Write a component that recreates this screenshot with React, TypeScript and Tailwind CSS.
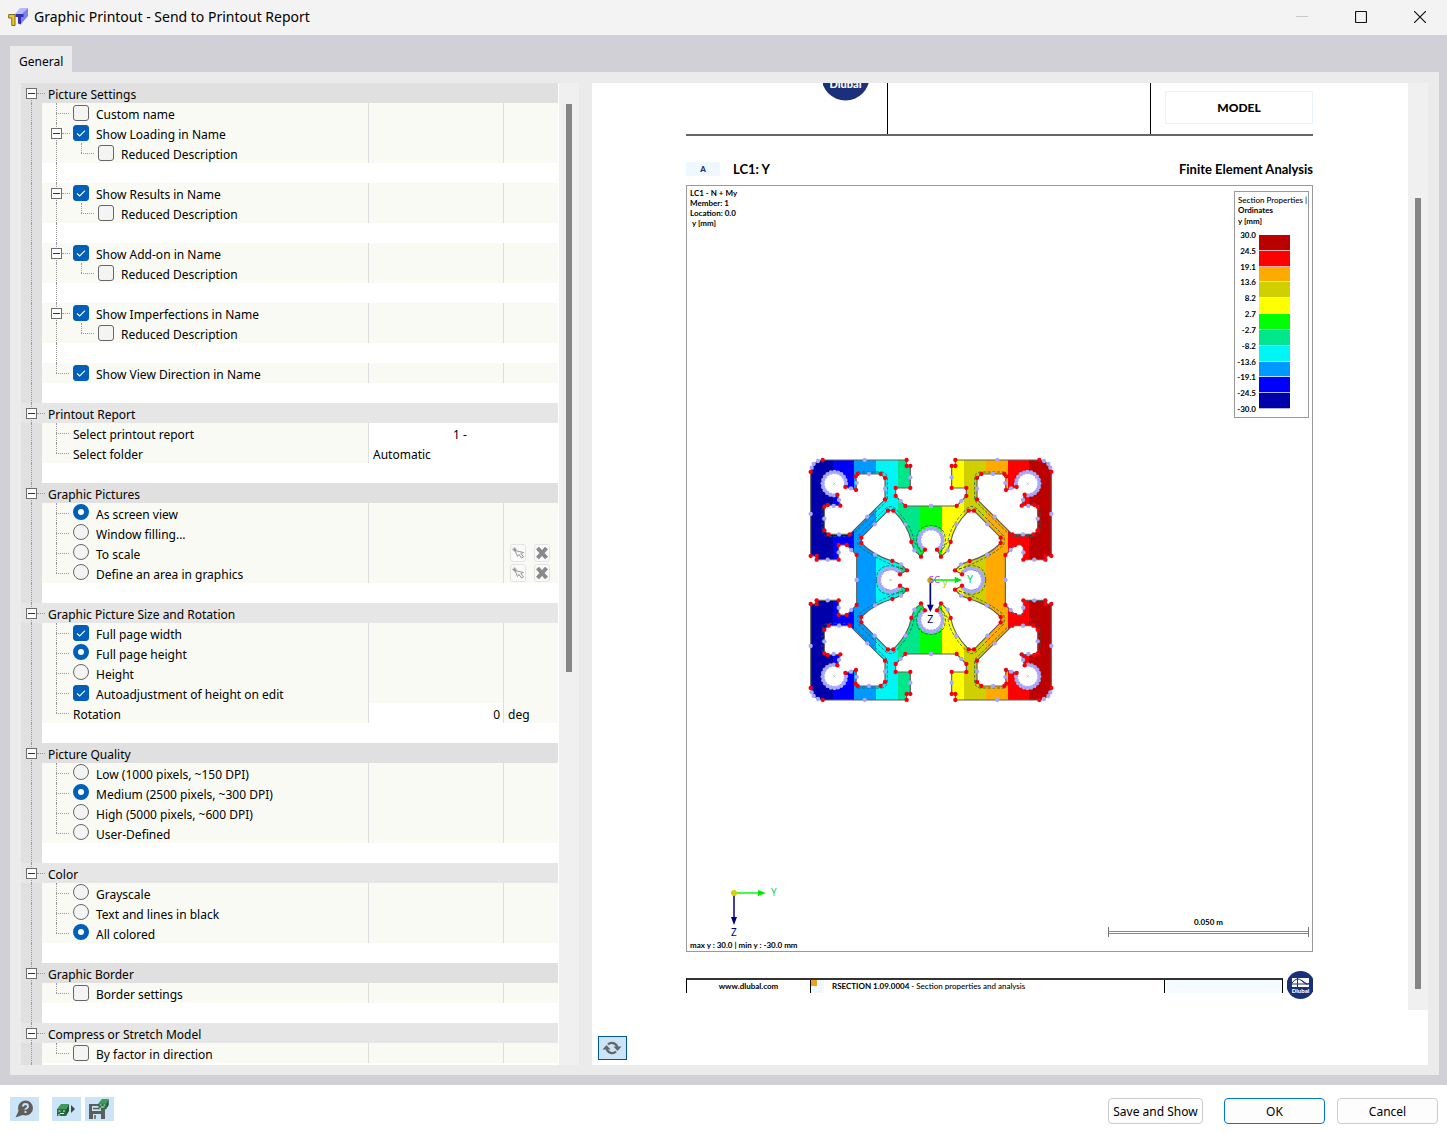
import React from "react";

type Row =
  | { kind: "head"; text: string }
  | { kind: "gap"; line?: boolean }
  | {
      kind: "check" | "radio" | "plain";
      text: string;
      checked?: boolean;
      level?: 2;
      box?: boolean;
      last?: boolean;
      group?: string;
      value?: "report" | "folder" | "angle";
      tools?: boolean;
    };

const rows: Row[] = [
  { kind: "head", text: "Picture Settings" },
  { kind: "check", text: "Custom name" },
  { kind: "check", text: "Show Loading in Name", checked: true, box: true },
  { kind: "check", text: "Reduced Description", level: 2 },
  { kind: "gap", line: true },
  { kind: "check", text: "Show Results in Name", checked: true, box: true },
  { kind: "check", text: "Reduced Description", level: 2 },
  { kind: "gap", line: true },
  { kind: "check", text: "Show Add-on in Name", checked: true, box: true },
  { kind: "check", text: "Reduced Description", level: 2 },
  { kind: "gap", line: true },
  { kind: "check", text: "Show Imperfections in Name", checked: true, box: true },
  { kind: "check", text: "Reduced Description", level: 2 },
  { kind: "gap", line: true },
  { kind: "check", text: "Show View Direction in Name", checked: true, last: true },
  { kind: "gap" },
  { kind: "head", text: "Printout Report" },
  { kind: "plain", text: "Select printout report", value: "report" },
  { kind: "plain", text: "Select folder", value: "folder", last: true },
  { kind: "gap" },
  { kind: "head", text: "Graphic Pictures" },
  { kind: "radio", text: "As screen view", checked: true, group: "view" },
  { kind: "radio", text: "Window filling...", group: "view" },
  { kind: "radio", text: "To scale", group: "view", tools: true },
  { kind: "radio", text: "Define an area in graphics", group: "view", tools: true, last: true },
  { kind: "gap" },
  { kind: "head", text: "Graphic Picture Size and Rotation" },
  { kind: "check", text: "Full page width", checked: true },
  { kind: "radio", text: "Full page height", checked: true, group: "size" },
  { kind: "radio", text: "Height", group: "size" },
  { kind: "check", text: "Autoadjustment of height on edit", checked: true },
  { kind: "plain", text: "Rotation", value: "angle", last: true },
  { kind: "gap" },
  { kind: "head", text: "Picture Quality" },
  { kind: "radio", text: "Low (1000 pixels, ~150 DPI)", group: "quality" },
  { kind: "radio", text: "Medium (2500 pixels, ~300 DPI)", checked: true, group: "quality" },
  { kind: "radio", text: "High (5000 pixels, ~600 DPI)", group: "quality" },
  { kind: "radio", text: "User-Defined", group: "quality", last: true },
  { kind: "gap" },
  { kind: "head", text: "Color" },
  { kind: "radio", text: "Grayscale", group: "color" },
  { kind: "radio", text: "Text and lines in black", group: "color" },
  { kind: "radio", text: "All colored", checked: true, group: "color", last: true },
  { kind: "gap" },
  { kind: "head", text: "Graphic Border" },
  { kind: "check", text: "Border settings", last: true },
  { kind: "gap" },
  { kind: "head", text: "Compress or Stretch Model" },
  { kind: "check", text: "By factor in direction", last: true },
  { kind: "gap" },
];

function Expander() {
  return (
    <button
      type="button"
      aria-label="Collapse"
      className="relative flex h-[11px] w-[11px] shrink-0 items-center justify-center border border-[#6e6e6e] bg-white"
    >
      <span className="h-px w-[7px] bg-[#333]" />
    </button>
  );
}

function Gutter() {
  return (
    <div className="w-[21px] shrink-0 bg-[#e0e0e0] pl-[10px]">
      <div className="h-5 border-l border-dotted border-[#999]" />
    </div>
  );
}

function Check({ id, checked }: { id: string; checked?: boolean }) {
  return (
    <span className="grid h-4 w-4 shrink-0">
      <input
        id={id}
        type="checkbox"
        defaultChecked={checked}
        className="peer col-start-1 row-start-1 h-4 w-4 appearance-none rounded-[3px] border border-[#666] bg-[#f4f4f4] checked:border-[#005fb8] checked:bg-[#005fb8]"
      />
      <svg
        viewBox="0 0 16 16"
        className="pointer-events-none invisible col-start-1 row-start-1 h-4 w-4 peer-checked:visible"
      >
        <path d="M4 8.5 6.7 11 12 5.7" fill="none" stroke="#fff" strokeWidth="1.1" />
      </svg>
    </span>
  );
}

function Radio({ id, group, checked }: { id: string; group?: string; checked?: boolean }) {
  return (
    <input
      id={id}
      name={group}
      type="radio"
      defaultChecked={checked}
      className="mb-0.5 h-4 w-4 shrink-0 appearance-none rounded-full border border-[#666] bg-[#f4f4f4] checked:border-5 checked:border-[#005fb8] checked:bg-white"
    />
  );
}

function RowTools() {
  return (
    <div className="flex h-full items-center gap-2 pl-[6px]">
      <button type="button" aria-label="Pick" className="flex h-[18px] w-4 items-center justify-center rounded-[3px] border border-[#e4e4e4] bg-[#fafafa]">
        <svg viewBox="0 0 14 14" className="h-3.5 w-3.5 shrink-0" fill="none" stroke="#999" strokeWidth="1">
          <path d="M1.500 3.500h4M3.500 1.500v4" strokeWidth="1.600" />
          <path d="M4 4.500 6.500 10.500 8 8.500 10.500 12 12.500 11 10 7.500 12.500 6.500Z" fill="#f4f4f4" />
        </svg>
      </button>
      <button type="button" aria-label="Clear" className="flex h-[18px] w-4 items-center justify-center rounded-[3px] border border-[#e4e4e4] bg-[#fafafa]">
        <svg viewBox="0 0 14 14" className="h-3.5 w-3.5 shrink-0" stroke="#8a8a8a" strokeWidth="4">
          <path d="M2.500 2l9 10M11.500 2l-9 10" />
        </svg>
      </button>
    </div>
  );
}

function TreeRow({ row, index, shade }: { row: Row; index: number; shade: boolean }) {
  const id = "opt-" + index;
  if (row.kind === "head") {
    return (
      <div className={"relative flex h-5 items-center " + (shade ? "bg-[#e0e0e0]" : "bg-[#e6e6e6]")}>
        <div
          className={
            "absolute left-[10px] border-l border-dotted border-[#999] " + (index === 0 ? "top-[10px] h-[10px]" : "top-0 h-5")
          }
        />
        <div className="flex w-[27px] items-center pl-[5px]">
          <Expander />
          <div className="w-2 border-t border-dotted border-[#999]" />
        </div>
        <span className="pt-1">{row.text}</span>
      </div>
    );
  }
  if (row.kind === "gap") {
    return (
      <div className="flex h-5 bg-white">
        <Gutter />
        <div className="pl-[14px]">
          {row.line && <div className="h-5 border-l border-dotted border-[#999]" />}
        </div>
      </div>
    );
  }
  const second = row.level === 2;
  return (
    <div className="flex h-5 bg-[#f9faf4]">
      <Gutter />
      <div className="relative flex w-[326px] shrink-0 items-center">
        {!second && (
          <div className={"absolute top-0 left-[14px] border-l border-dotted border-[#999] " + (row.last ? "h-[10px]" : "h-5")} />
        )}
        {second && <div className="absolute top-0 left-[14px] h-5 border-l border-dotted border-[#999]" />}
        {second && <div className="absolute top-0 left-[39px] h-[10px] border-l border-dotted border-[#999]" />}
        <div className={"flex shrink-0 items-center " + (second ? "w-[56px] pl-[39px]" : row.box ? "w-[31px] pl-[9px]" : "w-[31px] pl-[14px]")}>
          {row.box && <Expander />}
          <div className={"border-t border-dotted border-[#999] " + (row.box ? "w-2" : "w-[13px]")} />
        </div>
        {row.kind === "check" && <Check id={id} checked={row.checked} />}
        {row.kind === "radio" && <Radio id={id} group={row.group} checked={row.checked} />}
        <label htmlFor={id} className={row.kind === "plain" ? "pt-1" : "pt-1 pl-[7px]"}>
          {row.text}
        </label>
      </div>
      {row.value === "report" && (
        <div className="flex-1 border-l border-[#dedede] bg-white">
          <select id={id} className="h-5 w-full appearance-none bg-transparent pt-1 pl-[84px] leading-4">
            <option>1 -</option>
          </select>
        </div>
      )}
      {row.value === "folder" && (
        <div className="flex-1 border-l border-[#dedede] bg-white">
          <select id={id} className="h-5 w-full appearance-none bg-transparent pt-1 pl-1 leading-4">
            <option>Automatic</option>
          </select>
        </div>
      )}
      {row.value === "angle" && (
        <>
          <div className="w-[135px] shrink-0 border-l border-[#dedede] bg-white">
            <input id={id} type="text" defaultValue="0" className="h-5 w-full bg-transparent pt-0.5 pr-[3px] text-right" />
          </div>
          <div className="flex flex-1 items-center border-l border-[#dedede] pt-1 pl-1">deg</div>
        </>
      )}
      {!row.value && (
        <>
          <div className="w-[135px] shrink-0 border-l border-[#dedede]" />
          <div className="flex-1 border-l border-[#dedede]">{row.tools && <RowTools />}</div>
        </>
      )}
    </div>
  );
}

function Tree() {
  let heads = 0;
  return (
    <div className="flex w-[558px] shrink-0">
      <div className="w-[538px] overflow-hidden border-r border-white bg-white">
        {rows.map((row, i) => {
          if (row.kind === "head") heads += 1;
          return <TreeRow key={i} row={row} index={i} shade={heads % 2 === 1} />;
        })}
      </div>
      <div className="w-5 bg-[#f0f0f0] pt-[21px] pl-[7px]">
        <div className="h-[568px] w-1.5 bg-[#858585]" />
      </div>
    </div>
  );
}

const bands = ["#0000aa", "#0000ff", "#0099ff", "#00f5f5", "#00e68a", "#00ff00", "#ffff00", "#d0d000", "#ffaa00", "#ff0000", "#bb0000"];

const legend = ["30.0", "24.5", "19.1", "13.6", "8.2", "2.7", "-2.7", "-8.2", "-13.6", "-19.1", "-24.5", "-30.0"];

const outer =
  "M393 168H316L287 138V114H331V48H320V30H68Q36 34 32 66V318H50V329H116V285H140L170 315V390";
const inner =
  "M237 390A35 35 0 0 1 300 373L321 361L303 343L277 333Q222 318 184 279V263L264 182H280Q326 228 334 276L343 301L363 320L375 299A35 35 0 0 1 393 235";
const pocket =
  "M112 134A35 35 0 1 1 136 111L168 120L170 99L167 79L173 72H242L255 84V148L149 253H86L73 241V170L83 165L121 167L117 150Z";
const quarter =
  "M394 168H316L287 138V114H331V48H320V30H68Q36 34 32 66V318H50V329H116V285H140L170 315V391H237A35 35 0 0 1 300 373L321 361L303 343L277 333Q222 318 184 279V263L264 182H280Q326 228 334 276L343 301L363 320L375 299A35 35 0 0 1 394 235Z" +
  pocket;

const red: [number, number][] = [
  [68, 30], [320, 30], [320, 48], [331, 48], [331, 114], [287, 114], [287, 138], [316, 168],
  [32, 66], [32, 318], [50, 318], [50, 329], [116, 329], [116, 285], [140, 285], [170, 315],
  [300, 373], [321, 361], [277, 333], [184, 279], [184, 263], [264, 182], [280, 182], [334, 276], [363, 320], [375, 299],
  [112, 134], [136, 111], [168, 120], [167, 79], [173, 72], [242, 72], [255, 84], [255, 148], [149, 253], [86, 253],
  [73, 241], [73, 170], [83, 165], [121, 167],
];

function arc(cx: number, cy: number, r: number, from: number, to: number, n: number): [number, number][] {
  return Array.from({ length: n }, (_, i) => {
    const a = ((from + ((to - from) * i) / (n - 1)) * Math.PI) / 180;
    return [cx + r * Math.cos(a), cy + r * Math.sin(a)];
  });
}

const pale: [number, number][] = [
  [194, 30], [331, 82], [302, 153], [393, 168], [32, 192], [83, 329], [116, 307], [154, 300], [170, 390],
  [303, 343], [225, 314], [224, 223], [317, 223], [343, 301], [153, 115], [170, 99], [207, 72], [255, 116],
  [202, 200], [117, 253], [73, 206], [101, 168], [117, 150], [54, 33], [41, 42], [35, 53],
  ...arc(103, 101, 35, 92, 360, 16),
  ...arc(272, 390, 35, 180, 315, 8),
  ...arc(393, 270, 35, 137, 270, 8),
];

const mirrors = ["", "matrix(-1 0 0 1 786 0)", "matrix(1 0 0 -1 0 780)", "matrix(-1 0 0 -1 786 780)"];

function SectionDrawing() {
  return (
    <svg viewBox="0 0 786 780" className="h-[260px] w-[262px]" role="img" aria-label="Cross-section ordinates">
      <clipPath id="profile">
        {mirrors.map((m) => (
          <path key={m} d={quarter} clipRule="evenodd" transform={m || undefined} />
        ))}
      </clipPath>
      <g clipPath="url(#profile)" shapeRendering="crispEdges">
        {bands.map((c, i) => (
          <rect key={c} x={32 + i * 65.64} y="20" width="67" height="740" fill={c} />
        ))}
      </g>
      {mirrors.map((m) => (
        <g key={m} transform={m || undefined}>
          <g fill="none" stroke="#606060" strokeWidth="3.500">
            <path d={outer} />
            <path d={inner} />
            <path d={pocket} />
          </g>
          <g fill="none" stroke="#17605c" strokeWidth="2.500" strokeDasharray="9 5">
            <path d="M172 66H245Q262 68 262 86V151L152 260H84Q66 256 66 241V182Q68 162 88 159" />
            <path d="M229 390Q230 348 272 347L312 358Q230 330 176 287Q168 266 180 252L254 178Q274 160 290 180Q338 232 342 275L364 306L350 280Q346 228 393 227" />
          </g>
          {pale.map(([x, y], i) => (
            <circle key={i} cx={x} cy={y} r="6.500" fill="#a8a8fa" />
          ))}
          {red.map(([x, y], i) => (
            <circle key={i} cx={x} cy={y} r="6.500" fill="#f5000f" />
          ))}
        </g>
      ))}
      <g fill="none" stroke="#aaa" strokeWidth="2">
        <path d="M100 98l6 6m0-6-6 6M269 387l6 6m0-6-6 6M680 98l6 6m0-6-6 6M100 676l6 6m0-6-6 6M680 676l6 6m0-6-6 6" />
      </g>
      <path d="M393 390H470" stroke="#0f0" strokeWidth="5" />
      <path d="M464 380L486 390L464 400Z" fill="#00e020" />
      <path d="M391 390V468" stroke="#00008b" strokeWidth="5" />
      <path d="M381 464L391 486L401 464Z" fill="#00008b" />
      <circle cx="391" cy="391" r="9" fill="#b9b000" />
      <g className="font-['Noto_Sans'] font-normal">
        <text x="386" y="398" fontSize="29" fill="#a040e0">SC</text>
        <text x="428" y="409" fontSize="27" fill="#b4c800">y</text>
        <text x="501" y="398" fontSize="32" fill="#00d060">Y</text>
        <text x="382" y="518" fontSize="32" fill="#00007d">Z</text>
      </g>
    </svg>
  );
}

function Report() {
  return (
    <div className="flex min-w-0 flex-1 flex-col bg-white pr-[95px] pl-[94px] font-[Lato] text-[8px] leading-[10px] font-bold text-black">
      <header className="flex h-[53px] border-b-2 border-[#666]">
        <div className="flex w-[202px] justify-end border-r border-black pr-[18px]">
          <svg viewBox="0 0 46 18" className="h-[18px] w-[46px]" role="img" aria-label="Dlubal">
            <circle cx="22.500" cy="-6.500" r="24" fill="#1b2f7b" />
            <text x="22.500" y="5" fontSize="11" fontWeight="900" fill="#fff" textAnchor="middle">Dlubal</text>
          </svg>
        </div>
        <div className="flex-1" />
        <div className="w-[163px] border-l border-black pt-2 pl-[14px]">
          <div className="flex h-[33px] items-center justify-center border border-[#e6f4fd] text-[12px] font-black">MODEL</div>
        </div>
      </header>
      <div className="mt-[23px] flex h-[19px] items-center text-[12px] font-black">
        <span className="flex h-3.5 w-[34px] items-center justify-center bg-[#eff8ff] text-[8px] text-[#1b2f7b]">A</span>
        <span className="pl-[13px] text-[13px] font-bold">LC1: Y</span>
        <span className="ml-auto text-[13px] font-bold">Finite Element Analysis</span>
      </div>
      <figure className="mt-[7px] flex h-[767px] flex-col border border-[#999]">
        <div className="flex items-start justify-between pt-[2px] pr-[3px] pl-[3px]">
          <div>
            <p>LC1 - N + My</p>
            <p>Member: 1</p>
            <p>Location: 0.0</p>
            <p className="pl-0.5">y [mm]</p>
          </div>
          <div className="mt-[3px] h-[227px] w-[75px] border border-[#999] pt-[3px] pl-[3px]">
            <p className="font-medium whitespace-nowrap">Section Properties |</p>
            <p>Ordinates</p>
            <p className="pt-px">y [mm]</p>
            <div className="flex gap-[3px] pt-1">
              <div className="flex h-[184px] w-[18px] flex-col justify-between text-right">
                {legend.map((v) => (
                  <span key={v} className="self-end">{v}</span>
                ))}
              </div>
              <div className="mt-[5px] flex h-[174px] w-[31px] flex-col">
                {bands
                  .slice()
                  .reverse()
                  .map((c) => (
                    <div key={c} className="flex flex-1 flex-col justify-end" style={{ backgroundColor: c }}>
                      <div className="h-px bg-white/70" />
                    </div>
                  ))}
              </div>
            </div>
          </div>
        </div>
        <div className="mt-8 pl-[113px]">
          <SectionDrawing />
        </div>
        <div className="mt-auto flex items-end justify-between pr-[3px] pb-px pl-[3px]">
          <div>
            <svg viewBox="0 0 60 54" className="ml-9 h-[54px] w-[60px]" role="img" aria-label="Axes">
              <path d="M8 7H33" stroke="#0f0" strokeWidth="1.500" />
              <path d="M32 4L40 7L32 10Z" fill="#00e800" />
              <path d="M8 7V32" stroke="#00008b" strokeWidth="1.500" />
              <path d="M5 31L8 39L11 31Z" fill="#00007d" />
              <circle cx="8" cy="7" r="3" fill="#d8d000" />
              <g className="font-['Noto_Sans'] font-normal">
                <text x="45" y="10" fontSize="10" fill="#1fd060">Y</text>
                <text x="5" y="50" fontSize="10" fill="#00007d">Z</text>
              </g>
            </svg>
            <p>max y : 30.0 | min y : -30.0 mm</p>
          </div>
          <div className="mb-[13px] w-[201px] text-center">
            <p>0.050 m</p>
            <div className="flex h-[10px] items-center border-x border-[#777]">
              <div className="h-[3px] w-full border-y border-[#888]" />
            </div>
          </div>
        </div>
      </figure>
      <footer className="mt-[19px] flex h-7 items-center">
        <div className="flex h-[15px] flex-1 border-x border-t-2 border-x-black border-t-[#333]">
          <div className="flex w-[124px] items-center justify-center border-r border-black">
            <a href="#dlubal">www.dlubal.com</a>
          </div>
          <div className="flex flex-1 items-center">
            <div className="grid h-[13px] w-[13px] grid-cols-2 gap-px">
              <span className="bg-[#eaa023]" />
              <span className="bg-[#eff8ff]" />
              <span className="bg-[#eff8ff]" />
              <span className="bg-[#eff8ff]" />
            </div>
            <span className="pl-2">
              RSECTION 1.09.0004 <span className="font-medium">- Section properties and analysis</span>
            </span>
          </div>
          <div className="w-[118px] border-l border-black bg-[#f5fcff]" />
        </div>
        <svg viewBox="0 0 26 28" className="ml-1 h-7 w-[26px]" role="img" aria-label="Dlubal">
          <circle cx="13.500" cy="14" r="14" fill="#1b2f7b" />
          <path d="M5 7h17v9H5z" fill="#fff" />
          <path d="M5 13h17M10.500 7v9M5 12Q10 5 15 10T22 12M14 9l6 4" stroke="#1b2f7b" strokeWidth="1" fill="none" />
          <text x="13.500" y="22" fontSize="6" fontWeight="900" fill="#fff" textAnchor="middle">Dlubal</text>
        </svg>
      </footer>
    </div>
  );
}

function RefreshIcon() {
  return (
    <svg viewBox="0 0 20 16" className="mr-0.5 h-4 w-5">
      <path d="M6 4.500A5.500 5.500 0 0 1 15.200 7M14 11.500A5.500 5.500 0 0 1 4.800 9" fill="none" stroke="#666" strokeWidth="2.400" />
      <path d="M11.500 6.500H19.500L15.500 11ZM0.500 9.500H8.500L4.500 5Z" fill="#666" />
    </svg>
  );
}

function Cube() {
  return (
    <>
      <path d="M0 5 4 0 12 0 9 5Z" fill="#3f9a5c" />
      <path d="M9 5 12 0V7L9 12Z" fill="#1c5b31" />
      <path d="M0 5H9V12H0Z" fill="#2a6e40" />
      <path d="M1.500 7h2M6 7h2M3 9.500h4M1 11h2" stroke="#d8f5df" strokeWidth="1.200" />
    </>
  );
}

export default function App() {
  return (
    <div className="flex min-h-screen flex-col bg-[#d1d0d6] font-['Noto_Sans',sans-serif] text-[12px] leading-4 text-black">
      <div className="flex h-[35px] items-center bg-[#f3f3f3] pr-[21px] pb-0.5 pl-2">
        <svg viewBox="0 0 20 20" className="h-5 w-5" role="img" aria-label="RSECTION">
          <path d="M7 7 12 1H20L15 7Z" fill="#b8b8ff" />
          <path d="M14 7 20 1V9L13 17V10Z" fill="#8080ea" />
          <path d="M7.500 7H15.500V10H13V17.500L10 16.500V10H7.500Z" fill="#3030b0" />
          <path d="M0.700 7.500H7V18.500H3.800V11H0.700Z" fill="#f2c81c" stroke="#806a20" strokeWidth="1" />
        </svg>
        <h1 className="pl-1.5 text-[14px] leading-5">Graphic Printout - Send to Printout Report</h1>
        <div className="ml-auto flex items-center gap-[47px]">
          <button type="button" aria-label="Minimize" className="h-3 w-3">
            <svg viewBox="0 0 12 12" className="h-3 w-3"><path d="M0 5.500H12" stroke="#c8c8c8" /></svg>
          </button>
          <button type="button" aria-label="Maximize" className="h-3 w-3">
            <svg viewBox="0 0 12 12" className="h-3 w-3"><rect x="0.500" y="0.500" width="11" height="11" rx="1" fill="none" stroke="#111" strokeWidth="1.200" /></svg>
          </button>
          <button type="button" aria-label="Close" className="h-3 w-3">
            <svg viewBox="0 0 12 12" className="h-3 w-3"><path d="M0 0 12 12M12 0 0 12" stroke="#111" strokeWidth="1.200" /></svg>
          </button>
        </div>
      </div>

      <main className="flex flex-1 flex-col pt-[11px] pr-2 pb-[10px] pl-[10px]">
        <div role="tablist" className="flex h-[26px]">
          <button type="button" role="tab" aria-selected="true" className="bg-[#ebebeb] px-[9px] pt-1.5">General</button>
        </div>
        <div className="flex flex-1 bg-[#ebebeb] p-[11px] pb-[10px]">
          <div className="flex h-[982px] flex-1 overflow-hidden">
            <Tree />
            <section className="ml-[13px] flex min-w-0 flex-1 flex-col bg-white">
              <div className="flex h-[927px]">
                <Report />
                <div className="w-5 shrink-0 bg-[#f0f0f0] pt-[115px] pl-[7px]">
                  <div className="h-[791px] w-1.5 bg-[#858585]" />
                </div>
              </div>
              <div className="mt-[26px] pl-1.5">
                <button type="button" aria-label="Refresh preview" className="flex h-6 w-[29px] items-center justify-center border border-[#00559b] bg-[#cce4f7]">
                  <RefreshIcon />
                </button>
              </div>
            </section>
          </div>
        </div>
      </main>

      <footer className="flex h-[49px] items-start bg-white pt-3 pr-[9px] pl-[10px]">
        <button type="button" aria-label="Help" className="flex h-6 w-[29px] items-center justify-center bg-[#cce4f7] pr-0.5">
          <svg viewBox="0 0 18 18" className="h-[18px] w-[18px]">
            <circle cx="10.500" cy="8" r="7.500" fill="#5e5e5e" />
            <path d="M4 10 0.500 17.500 9 14.500Z" fill="#5e5e5e" />
            <path d="M8 6.500Q8 4 10.500 4T13 6.500Q13 7.500 11.500 8.500T10.500 9.800M10.500 11v2" fill="none" stroke="#cce4f7" strokeWidth="1.800" />
          </svg>
        </button>
        <button type="button" aria-label="Load settings" className="ml-[13px] flex h-6 w-[29px] items-center justify-center bg-[#cce4f7] pr-0.5">
          <svg viewBox="0 0 20 16" className="h-4 w-5">
            <g transform="translate(1 3)"><Cube /></g>
            <path d="M15 4 19 8 15 12Z" fill="#444" />
          </svg>
        </button>
        <button type="button" aria-label="Save settings" className="ml-1 flex h-6 w-[29px] items-center justify-center bg-[#cce4f7] pr-px">
          <svg viewBox="0 0 20 20" className="h-5 w-5">
            <path d="M0 5H13L16 8V20H0Z" fill="#5e5e5e" />
            <path d="M3 7h9v5H3zM4 15h8v5H4z" fill="#cce4f7" />
            <path d="M4 9.500h7M6 16v4" stroke="#5e5e5e" strokeWidth="1.500" />
            <g transform="translate(9.500 0) scale(.85)"><Cube /></g>
          </svg>
        </button>
        <div className="ml-auto flex pt-px">
          <button type="button" className="h-[26px] w-[95px] rounded-[4px] border border-[#ccc] bg-[#fdfdfd] pt-0.5 whitespace-nowrap">Save and Show</button>
          <button type="button" className="ml-[21px] h-[26px] w-[101px] rounded-[4px] border border-[#0078d4] bg-[#fdfdfd] pt-0.5">OK</button>
          <button type="button" className="ml-3 h-[26px] w-[101px] rounded-[4px] border border-[#ccc] bg-[#fdfdfd] pt-0.5">Cancel</button>
        </div>
      </footer>
    </div>
  );
}
